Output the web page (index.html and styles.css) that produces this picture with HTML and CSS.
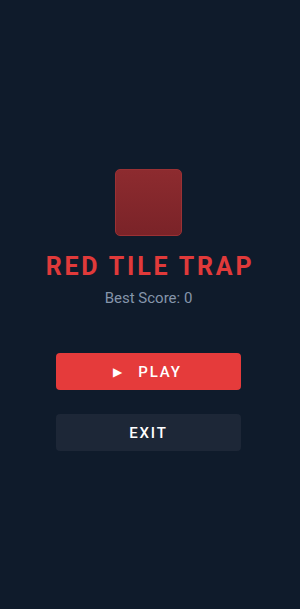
FILE: index.html
```html
<!DOCTYPE html>
<html lang="en">
<head>
    <meta charset="UTF-8">
    <meta name="viewport" content="width=device-width, initial-scale=1.0">
    <title>Red Tile Trap</title>
    <link rel="stylesheet" href="styles.css">
</head>
<body>

<main class="menu-screen">
    <div class="logo-tile"></div>
    <h1 class="game-title">RED TILE TRAP</h1>
    <p class="best-score">Best Score: <span class="score-value">0</span></p>

    <div class="menu-actions">
        <button class="menu-btn btn-play">
            <span class="play-icon">&#9654;</span>
            <span>PLAY</span>
        </button>
        <button class="menu-btn btn-exit">EXIT</button>
    </div>
</main>

</body>
</html>
```

FILE: styles.css
```css
/* --- Base --- */
body {
    margin: 0;
    background-color: #0f1b2b;
    font-family: Roboto, "Liberation Sans", sans-serif;
    min-height: 609px;
}

/* --- Main menu --- */
.menu-screen {
    display: flex;
    flex-direction: column;
    align-items: center;
    padding-top: 169px;
    padding-right: 3px; /* content sits a touch left of centre */
}

.logo-tile {
    width: 65px;
    height: 65px;
    border-radius: 5px;
    border: 1px solid #9a3134;
    background: linear-gradient(180deg, #8d2b2f 0%, #7a2328 100%);
}

.game-title {
    margin: 16px 0 0 0;
    font-size: 25px;
    line-height: 30px;
    font-weight: 700;
    letter-spacing: 2.8px;
    color: #e03a3a;
    padding-left: 3px; /* balance trailing letter-spacing */
}

.best-score {
    margin: 6px 0 0 0;
    font-size: 15px;
    line-height: 20px;
    color: #8595aa;
}

/* --- Buttons --- */
.menu-actions {
    display: flex;
    flex-direction: column;
    gap: 24px;
    margin-top: 45px;
}

.menu-btn {
    width: 185px;
    height: 37px;
    border: none;
    border-radius: 4px;
    font-family: inherit;
    font-size: 15px;
    font-weight: 500;
    letter-spacing: 1.8px;
    color: #ffffff;
    display: flex;
    align-items: center;
    justify-content: center;
    cursor: pointer;
}

.btn-play {
    background-color: #e53b3b;
    gap: 16px;
    padding-left: 4px;
}

.play-icon {
    font-size: 12px;
    letter-spacing: 0;
}

.btn-exit {
    background-color: #1d2737;
}
```
